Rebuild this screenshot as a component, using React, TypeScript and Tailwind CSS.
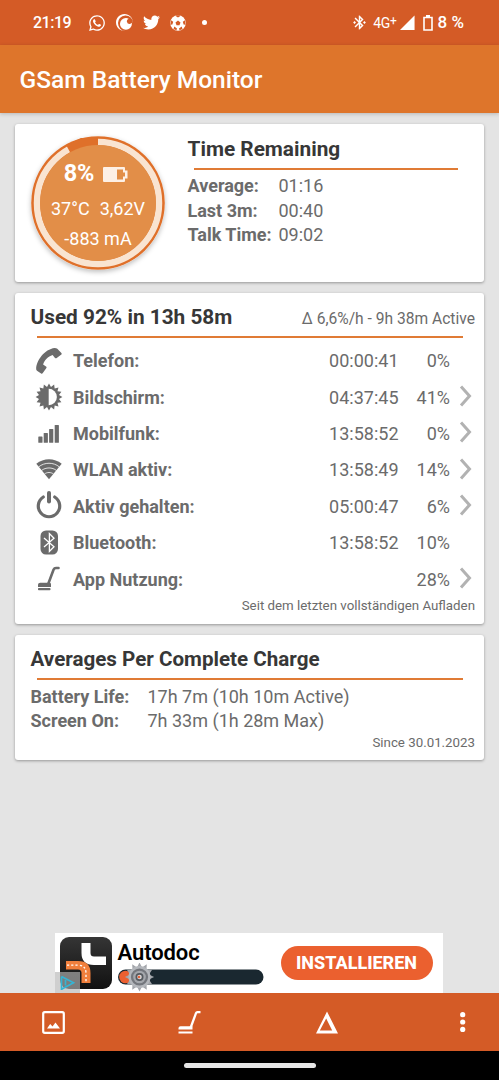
import React from "react";
import { FaTwitter, FaWhatsapp } from "react-icons/fa";
import { MdBluetoothConnected } from "react-icons/md";
import { SiCrunchyroll } from "react-icons/si";

function starPoints(cx: number, cy: number, outer: number, inner: number, count: number) {
  const points: string[] = [];
  for (let i = 0; i < count * 2; i++) {
    const r = i % 2 === 0 ? outer : inner;
    const a = (Math.PI * i) / count - Math.PI / 2;
    points.push(`${(cx + r * Math.cos(a)).toFixed(2)},${(cy + r * Math.sin(a)).toFixed(2)}`);
  }
  return points.join(" ");
}

function BallIcon() {
  return (
    <svg width="16" height="16" viewBox="0 0 16 16">
      <circle cx="8" cy="8" r="7.800" fill="white" />
      <g fill="#d45b26">
        <path d="M8 5.500 10.500 7.400 9.500 10.300H6.500L5.500 7.400z" />
        <path d="M5.600 1 8 2.600 10.400 1 9.500.3h-3zM1 5.200l2.200 1.600L2.400 9.600.4 9.700zM15 5.200l-2.200 1.600.8 2.800 2 .1zM3.500 14l.8-2.600 2.700 2-.6 1.900zM12.500 14l-.8-2.600-2.700 2 .6 1.900z" />
      </g>
    </svg>
  );
}

function PhoneIcon() {
  return (
    <svg width="28" height="28" viewBox="0 0 28 28" fill="currentColor">
      <path d="M1.200 22.200C1 13.600 9.700 2.200 19.600 1c1.100 0 2 .2 2.700.8l4.100 4.100c.5.6.5 1.200 0 1.700l-4.700 3.500c-.6.4-1.200.3-1.700-.2l-2.400-2.800C13 9.600 9.300 13.400 8.100 17.600l2.900 1.900c.6.4.700 1 .4 1.600l-3.600 5c-.5.6-1.100.7-1.700.3l-4.100-2.700c-.5-.4-.8-.9-.8-1.500z" />
    </svg>
  );
}

function BrightnessIcon() {
  return (
    <svg width="28" height="28" viewBox="0 0 28 28" fill="currentColor">
      <polygon points={starPoints(14, 14, 13.4, 10.2, 16)} />
      <path d="M13.700 5.800a8.200 8.200 0 0 1 0 16.400z" fill="white" />
    </svg>
  );
}

function SignalIcon() {
  return (
    <svg width="28" height="28" viewBox="0 0 28 28" fill="currentColor">
      <rect x="3.300" y="17.500" width="4.200" height="6.300" rx=".6" />
      <rect x="8.700" y="14" width="4.200" height="9.800" rx=".6" />
      <rect x="14.100" y="10" width="4.200" height="13.800" rx=".6" />
      <rect x="19.700" y="6" width="4.200" height="17.800" rx=".6" />
    </svg>
  );
}

function WifiIcon() {
  return (
    <svg width="28" height="28" viewBox="0 0 28 28" fill="currentColor">
      <path d="M1.300 7.800C8.500 1.800 19.500 1.800 26.700 7.800L14 23.300z" />
      <g fill="none" stroke="white" strokeWidth=".8">
        <path d="M3.500 11c6-5 15-5 21 0" />
        <path d="M6.500 14.500c4.300-3.400 10.700-3.400 15 0" />
        <path d="M9.500 18c2.600-2 6.400-2 9 0" />
      </g>
    </svg>
  );
}

function PowerIcon() {
  return (
    <svg width="28" height="30" viewBox="0 0 28 30" fill="none" stroke="currentColor" strokeLinecap="round">
      <path d="M8.300 6A10.700 10.700 0 1 0 19.700 6" strokeWidth="3.200" />
      <path d="M14 2v8.500" strokeWidth="4" />
    </svg>
  );
}

function BluetoothIcon() {
  return (
    <svg width="28" height="28" viewBox="0 0 28 28">
      <rect x="5.500" y="1.500" width="17.500" height="24" rx="5.500" fill="currentColor" />
      <path d="m9 9 10 8.700-4.600 4.800V4.500l4.600 4.800L9 18" fill="none" stroke="white" strokeWidth="1.300" />
    </svg>
  );
}

function VacuumIcon() {
  return (
    <svg width="28" height="28" viewBox="0 0 28 28" fill="currentColor">
      <path d="M13.200 19 18.600 4.500Q19.300 3 21 3H23.500" fill="none" stroke="currentColor" strokeWidth="2.600" strokeLinecap="round" />
      <path d="M3 22v-2c0-1.500 1-2.300 2.300-2.300H14.500c1 0 1.500.7 1.500 1.600V22z" />
      <rect x="3" y="23" width="12.500" height="2.300" rx=".8" />
    </svg>
  );
}

function Chevron() {
  return (
    <svg width="14" height="22" viewBox="0 0 14 22" fill="none" stroke="#b2b2b2" strokeWidth="3">
      <path d="m2 1.500 8.500 9.500L2 20.500" />
    </svg>
  );
}

const usage = [
  { icon: <PhoneIcon />, label: "Telefon:", time: "00:00:41", pct: "0%", more: false },
  { icon: <BrightnessIcon />, label: "Bildschirm:", time: "04:37:45", pct: "41%", more: true },
  { icon: <SignalIcon />, label: "Mobilfunk:", time: "13:58:52", pct: "0%", more: true },
  { icon: <WifiIcon />, label: "WLAN aktiv:", time: "13:58:49", pct: "14%", more: true },
  { icon: <PowerIcon />, label: "Aktiv gehalten:", time: "05:00:47", pct: "6%", more: true },
  { icon: <BluetoothIcon />, label: "Bluetooth:", time: "13:58:52", pct: "10%", more: false },
  { icon: <VacuumIcon />, label: "App Nutzung:", time: "", pct: "28%", more: true },
];

const remaining = [
  { label: "Average:", value: "01:16" },
  { label: "Last 3m:", value: "00:40" },
  { label: "Talk Time:", value: "09:02" },
];

const averages = [
  { label: "Battery Life:", value: "17h 7m (10h 10m Active)" },
  { label: "Screen On:", value: "7h 33m (1h 28m Max)" },
];

function StatusBar() {
  return (
    <div className="flex h-[45px] shrink-0 items-center bg-[#d45b26] pr-[35px] pl-[33px] text-white">
      <span className="w-[55px] pt-px text-base font-medium tracking-[-0.5px]">21:19</span>
      <div className="flex items-center gap-[10px]">
        <FaWhatsapp size={18} />
        <SiCrunchyroll size={17} />
        <FaTwitter size={17} />
        <BallIcon />
        <span className="ml-1.5 h-[5px] w-[5px] rounded-full bg-white" />
      </div>
      <div className="ml-auto flex items-center">
        <MdBluetoothConnected size={17} />
        <span className="ml-[5px] text-sm tracking-[-0.3px]">
          4G<span className="relative -top-[3px] text-xs">+</span>
        </span>
        <svg className="ml-[3px]" width="15" height="16" viewBox="0 0 16 16" fill="white">
          <path d="M0 15.500 15.500 0v15.500z" />
        </svg>
        <svg className="ml-2" width="10" height="16" viewBox="0 0 10 16">
          <path d="M1 2.500h8V15H1z" fill="none" stroke="white" strokeWidth="1.600" />
          <path d="M3 0h4v2H3z" fill="white" />
        </svg>
        <span className="ml-[5px] pt-px text-[17px] font-medium">8 %</span>
      </div>
    </div>
  );
}

function BatteryGauge() {
  return (
    <div className="relative h-[134px] w-[134px] rounded-full text-white shadow-[0_2px_5px_rgba(0,0,0,0.25)]">
      <svg className="absolute inset-0" width="134" height="134" viewBox="0 0 134 134">
        <circle cx="67" cy="67" r="66.800" fill="#df702a" />
        <circle cx="67" cy="67" r="61" fill="none" stroke="#f9e4d1" strokeWidth="6.500" />
        <path d="M67 67V2H50L35.500 9.800z" fill="#df702a" />
        <circle cx="67" cy="67" r="58" fill="#e28e48" />
      </svg>
      <div className="relative flex flex-col items-center pt-[26px]">
        <div className="flex h-6 -translate-x-0.5 items-center gap-[9px]">
          <span className="text-[23.5px] font-bold tracking-[-0.3px]">8%</span>
          <svg width="25" height="15" viewBox="0 0 25 15">
            <path d="M1 0h20a1 1 0 0 1 1 1v2.500h2.500v8H22V14a1 1 0 0 1-1 1H1a1 1 0 0 1-1-1V1a1 1 0 0 1 1-1z" fill="#fdf0e6" />
            <path d="M14 2.500h6V5.500h2v4h-2v3h-6z" fill="#e28e48" />
          </svg>
        </div>
        <div className="mt-[10px] flex h-6 items-center gap-2.5 text-[18px]">
          <span>37°C</span>
          <span>3,62V</span>
        </div>
        <div className="mt-[7px] h-6 text-[18px] leading-6">-883 mA</div>
      </div>
    </div>
  );
}

function AdBanner() {
  return (
    <div className="mx-auto mt-auto flex h-[60px] w-[388px] -translate-x-px items-center bg-white">
      <div className="relative ml-[5px] h-[52px] w-[52px]">
        <svg width="52" height="52" viewBox="0 0 52 52">
          <defs>
            <linearGradient id="tile" x1="0" y1="0" x2="0" y2="1">
              <stop offset="0" stopColor="#353535" />
              <stop offset="1" stopColor="#111111" />
            </linearGradient>
          </defs>
          <rect width="52" height="52" rx="9" fill="url(#tile)" />
          <path d="M21.500 6h9v10q0 3.500 3.500 3.500h12V28H34Q21.500 28 21.500 16z" fill="white" />
          <path d="M6 24h12Q30.500 24 30.500 36v10H21.500V36q0-3.500-3.500-3.500H6z" fill="#f07f3c" />
          <path d="M7 28.200h11q8 0 8 8V46" fill="none" stroke="white" strokeWidth="1.300" strokeDasharray="2.200 2" />
        </svg>
        <svg className="absolute top-[35px] -left-[5px]" width="25" height="21" viewBox="0 0 25 21">
          <rect width="25" height="21" fill="#b5b5b5" opacity=".65" />
          <path d="m6.500 4.500 12 6.200-11.500 6.300M6.500 4.500v13.500M10.500 8v5.500" fill="none" stroke="#35b4d4" strokeWidth="1.700" />
        </svg>
      </div>
      <div className="ml-1.5 w-[146px] pt-[5px]">
        <div className="text-[22px] leading-[26px] font-semibold tracking-[-0.1px] text-black">Autodoc</div>
        <svg className="-mt-[3px] block" width="146" height="29" viewBox="0 0 146 29">
          <rect x="0" y="6.500" width="145.500" height="15" rx="7.500" fill="#1a2830" />
          <circle cx="7.500" cy="14" r="6.300" fill="#ec6030" />
          <polygon points={starPoints(21.5, 14, 14.6, 9.8, 12)} fill="#a2a5aa" />
          <circle cx="21.500" cy="14" r="11" fill="#b4b7bc" />
          <circle cx="21.500" cy="14" r="8.600" fill="#74777d" />
          <circle cx="21.500" cy="14" r="6.300" fill="#a4a7ac" />
          <circle cx="21.500" cy="14" r="4" fill="#55595e" />
          <circle cx="21.500" cy="14" r="2.300" fill="#d8dadc" />
          <circle cx="21" cy="14" r="1.300" fill="#e4643a" />
        </svg>
      </div>
      <button type="button" className="mb-[1px] ml-[17px] h-[34px] w-[152px] rounded-full bg-[#eb602f] text-[18px] font-extrabold text-white">
        INSTALLIEREN
      </button>
    </div>
  );
}

function BottomBar() {
  return (
    <nav className="flex h-[58px] shrink-0 items-center bg-[#d45b26] pl-[42px] text-white">
      <svg width="23" height="23" viewBox="0 0 23 23">
        <rect x="1.200" y="1.200" width="20.600" height="20.600" rx="1.500" fill="none" stroke="white" strokeWidth="2.200" />
        <path d="m5 17.500 3.200-4.500 2.300 2.500 3-4 4.500 6z" fill="white" />
      </svg>
      <svg className="ml-[113px]" width="23" height="23" viewBox="0 0 23 23">
        <path d="M12.500 17 18 2.200q.4-1 1.400-1H22.500" fill="none" stroke="white" strokeWidth="2.300" />
        <path d="M.5 18.500V17q0-1.800 2-1.800H14.500v3.300zM.5 20.500h14v2H.5z" fill="white" />
      </svg>
      <svg className="ml-[115px]" width="22" height="23" viewBox="0 0 22 23">
        <path fillRule="evenodd" d="M11 .5 22 22.500H0zM10.200 7.500 3.800 19.500h12.400z" fill="white" />
      </svg>
      <svg className="ml-[118px] w-3.5" height="22" viewBox="0 0 14 22" fill="white">
        <circle cx="6.700" cy="3.700" r="2.600" />
        <circle cx="6.700" cy="11" r="2.600" />
        <circle cx="6.700" cy="18.400" r="2.600" />
      </svg>
    </nav>
  );
}

export default function App() {
  return (
    <div className="flex h-[1080px] w-[499px] flex-col overflow-hidden bg-[#e4e4e4] font-[Roboto,sans-serif] text-[#6b6b6b]">
      <StatusBar />
      <header className="flex h-[68px] shrink-0 items-center bg-[#de752b] pt-[3px] pl-[19.5px] shadow-[0_1px_4px_rgba(0,0,0,0.2)]">
        <h1 className="text-[24.5px] font-medium text-white">GSam Battery Monitor</h1>
      </header>

      <main className="flex flex-1 flex-col px-[15px] pt-[11px]">
        <section className="flex h-[158px] rounded-[3px] bg-white pt-3 pl-4 shadow-[0_1px_3px_rgba(0,0,0,0.35)]">
          <BatteryGauge />
          <div className="ml-[22.5px]">
            <h2 className="h-[26px] text-[20.8px] leading-[26px] font-bold text-[#373737]">Time Remaining</h2>
            <div className="mt-[6px] ml-1.5 h-[1.5px] w-[264px] bg-[#e07b35]" />
            <dl className="mt-[4.5px] text-[18px] leading-[24.5px]">
              {remaining.map((row) => (
                <div key={row.label} className="flex">
                  <dt className="w-[91px] font-bold whitespace-nowrap">{row.label}</dt>
                  <dd>{row.value}</dd>
                </div>
              ))}
            </dl>
          </div>
        </section>

        <section className="mt-[11px] h-[331px] rounded-[3px] bg-white pt-[11px] pr-[9px] pl-[15.5px] shadow-[0_1px_3px_rgba(0,0,0,0.35)]">
          <div className="flex h-[32px] justify-between">
            <h2 className="text-[20.8px] leading-[27px] font-bold text-[#373737]">Used 92% in 13h 58m</h2>
            <span className="text-[15.6px] leading-[31px]">Δ 6,6%/h - 9h 38m Active</span>
          </div>
          <div className="ml-1.5 h-[1.5px] w-[426px] bg-[#e07b35]" />
          <ul className="mt-[5px] text-[18px]">
            {usage.map((row) => (
              <li key={row.label} className="flex h-[36.4px] items-center">
                <span className="ml-[4px] flex w-[38.5px]">{row.icon}</span>
                <span className="flex-1 font-bold">{row.label}</span>
                <span>{row.time}</span>
                <span className="w-[51.5px] text-right">{row.pct}</span>
                <span className="flex w-[25px] -translate-y-px justify-end pr-0.5">{row.more && <Chevron />}</span>
              </li>
            ))}
          </ul>
          <p className="text-right text-[13.3px] leading-[18px]">Seit dem letzten vollständigen Aufladen</p>
        </section>

        <section className="mt-[11px] h-[125px] rounded-[3px] bg-white pt-[11px] pr-[9px] pl-[15.5px] shadow-[0_1px_3px_rgba(0,0,0,0.35)]">
          <h2 className="h-8 text-[20.6px] leading-[27px] font-bold text-[#373737]">Averages Per Complete Charge</h2>
          <div className="ml-1.5 h-[1.5px] w-[426px] bg-[#e07b35]" />
          <dl className="mt-[5px] text-[18px] leading-[24.5px]">
            {averages.map((row) => (
              <div key={row.label} className="flex">
                <dt className="w-[117px] font-bold">{row.label}</dt>
                <dd>{row.value}</dd>
              </div>
            ))}
          </dl>
          <p className="text-right text-[13.3px] leading-[17px]">Since 30.01.2023</p>
        </section>

        <AdBanner />
      </main>

      <BottomBar />
      <div className="flex h-[29px] shrink-0 items-center justify-center bg-black">
        <div className="h-[5px] w-[132px] rounded-full bg-[#e6e6e6]" />
      </div>
    </div>
  );
}
